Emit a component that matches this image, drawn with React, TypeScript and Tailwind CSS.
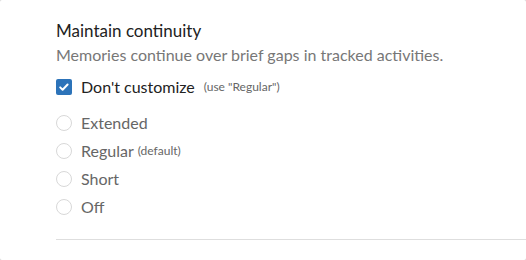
import { useState } from 'react'

const options = [
  { id: 'extended', label: 'Extended' },
  { id: 'regular', label: 'Regular', note: '(default)' },
  { id: 'short', label: 'Short' },
  { id: 'off', label: 'Off' },
]

const App = () => {
  const [useDefault, setUseDefault] = useState(true)
  const [choice, setChoice] = useState<string | null>(null)

  return (
    <div className="h-[260px] w-[526px] bg-[#d4d4d4] font-['Lato',sans-serif]">
      <div className="h-full w-full rounded-[2px] bg-white pl-14 pt-[20px]">
        <div className="text-[17px] leading-[22px] text-[#222]">Maintain continuity</div>
        <div className="mt-[2px] text-[16px] leading-[22px] text-[#777]">
          Memories continue over brief gaps in tracked activities.
        </div>

        <label className="mt-[12px] flex h-[18px] cursor-pointer items-center gap-[9px]">
          <span
            onClick={() => setUseDefault(!useDefault)}
            className={
              useDefault
                ? 'flex h-4 w-4 items-center justify-center rounded-[2px] bg-[#2c73b9]'
                : 'flex h-4 w-4 items-center justify-center rounded-[2px] border border-[#ccc] bg-white'
            }
          >
            {useDefault && (
              <svg viewBox="0 0 16 16" className="h-4 w-4" fill="none">
                <path
                  d="M4.2 8.4l2.4 2.3 5-5.2"
                  stroke="white"
                  strokeWidth="2"
                  strokeLinecap="round"
                  strokeLinejoin="round"
                />
              </svg>
            )}
          </span>
          <span className="text-[16px] text-[#222]">Don't customize</span>
          <span className="text-[12px] text-[#666]">(use "Regular")</span>
        </label>

        <div className="mt-[18px] flex flex-col gap-[10px]">
          {options.map((o) => (
            <label
              key={o.id}
              onClick={() => setChoice(o.id)}
              className="flex h-[18px] cursor-pointer items-center gap-[9px]"
            >
              <span className="flex h-4 w-4 items-center justify-center rounded-full border border-[#d8d8d8] bg-white">
                {choice === o.id && !useDefault && (
                  <span className="h-2 w-2 rounded-full bg-[#2c73b9]" />
                )}
              </span>
              <span className="text-[16px] text-[#666]">{o.label}</span>
              {o.note && <span className="-ml-[5px] text-[12px] text-[#666]">{o.note}</span>}
            </label>
          ))}
        </div>

        <div className="mt-[23px] border-t border-[#dedede]" />
      </div>
    </div>
  )
}

export default App
